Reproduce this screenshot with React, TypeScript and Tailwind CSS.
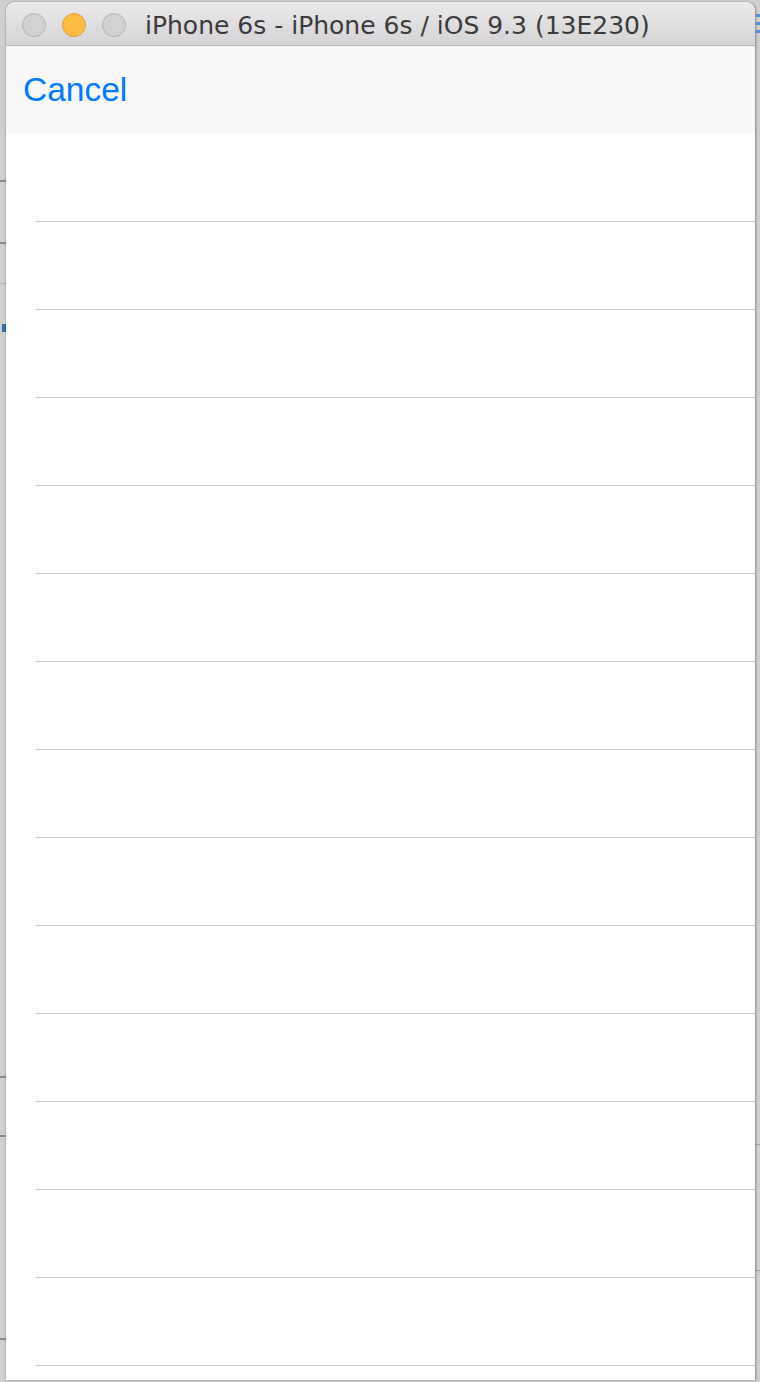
import React from "react";

function Strip({ items, className }: { items: { h: number; c?: string; w?: string }[]; className: string }) {
  return (
    <div className={className}>
      {items.map((it, i) => (
        <div key={i} className="shrink-0 flex justify-end" style={{ height: it.h }}>
          {it.c ? <div className="h-full" style={{ width: it.w ?? "100%", background: it.c }} /> : null}
        </div>
      ))}
    </div>
  );
}

export default function App() {
  const rows = Array.from({ length: 14 });
  const left = [
    { h: 180 },
    { h: 2, c: "#8a8a8a" },
    { h: 60 },
    { h: 2, c: "#8a8a8a" },
    { h: 39 },
    { h: 1, c: "#b0b0b0" },
    { h: 40 },
    { h: 8, c: "#2f6db5", w: "4px" },
    { h: 744 },
    { h: 2, c: "#8a8a8a" },
    { h: 57 },
    { h: 2, c: "#8a8a8a" },
    { h: 201 },
    { h: 2, c: "#8a8a8a" },
  ];
  const right = [
    { h: 14 },
    { h: 3, c: "#4a8fe0" },
    { h: 5 },
    { h: 3, c: "#4a8fe0" },
    { h: 5 },
    { h: 3, c: "#4a8fe0" },
    { h: 1111 },
    { h: 1, c: "#9a9a9a" },
    { h: 125 },
    { h: 1, c: "#9a9a9a" },
  ];
  return (
    <div
      className="flex w-[760px] h-[1382px] overflow-hidden bg-[#cfcfcf]"
      style={{ fontFamily: '"Liberation Sans", Arial, sans-serif' }}
    >
      <Strip items={left} className="flex flex-col w-[6px] shrink-0" />

      {/* window */}
      <div className="flex flex-col flex-1 mt-[2px] mb-[2px] rounded-t-[9px] overflow-hidden bg-white shadow-[0_0_2px_rgba(0,0,0,0.45)] border-r border-[#9d9d9d]">
        {/* title bar */}
        <div className="flex items-center h-[44px] shrink-0 border-b border-[#b3b1b3] bg-gradient-to-b from-[#ebe9eb] to-[#d5d3d5]">
          <div className="flex items-center gap-[16px] pl-[16px] mt-[2px]">
            <div className="w-[24px] h-[24px] rounded-full bg-[#d3d1d3] border border-[#b5b3b5]" />
            <div className="w-[24px] h-[24px] rounded-full bg-[#fdbc40] border border-[#dea236]" />
            <div className="w-[24px] h-[24px] rounded-full bg-[#d3d1d3] border border-[#b5b3b5]" />
          </div>
          <div
            className="ml-[19px] mt-[4px] text-[25px] leading-none text-[#3c3a3c]"
            style={{ fontFamily: '"DejaVu Sans", Verdana, sans-serif' }}
          >
            iPhone 6s - iPhone 6s / iOS 9.3 (13E230)
          </div>
        </div>
        {/* nav bar */}
        <div className="flex items-center h-[88px] shrink-0 bg-[#f8f8f8] pl-[17px]">
          <span className="text-[33.5px] leading-none text-[#007aff] mt-[-1px]">Cancel</span>
        </div>
        {/* table */}
        <div className="flex flex-col flex-1 bg-white">
          {rows.map((_, i) => (
            <div key={i} className="h-[88px] shrink-0 pl-[30px]">
              <div className="h-full border-b border-[#c8c7cc]" />
            </div>
          ))}
        </div>
      </div>

      <Strip items={right} className="flex flex-col w-[4px] shrink-0" />
    </div>
  );
}
